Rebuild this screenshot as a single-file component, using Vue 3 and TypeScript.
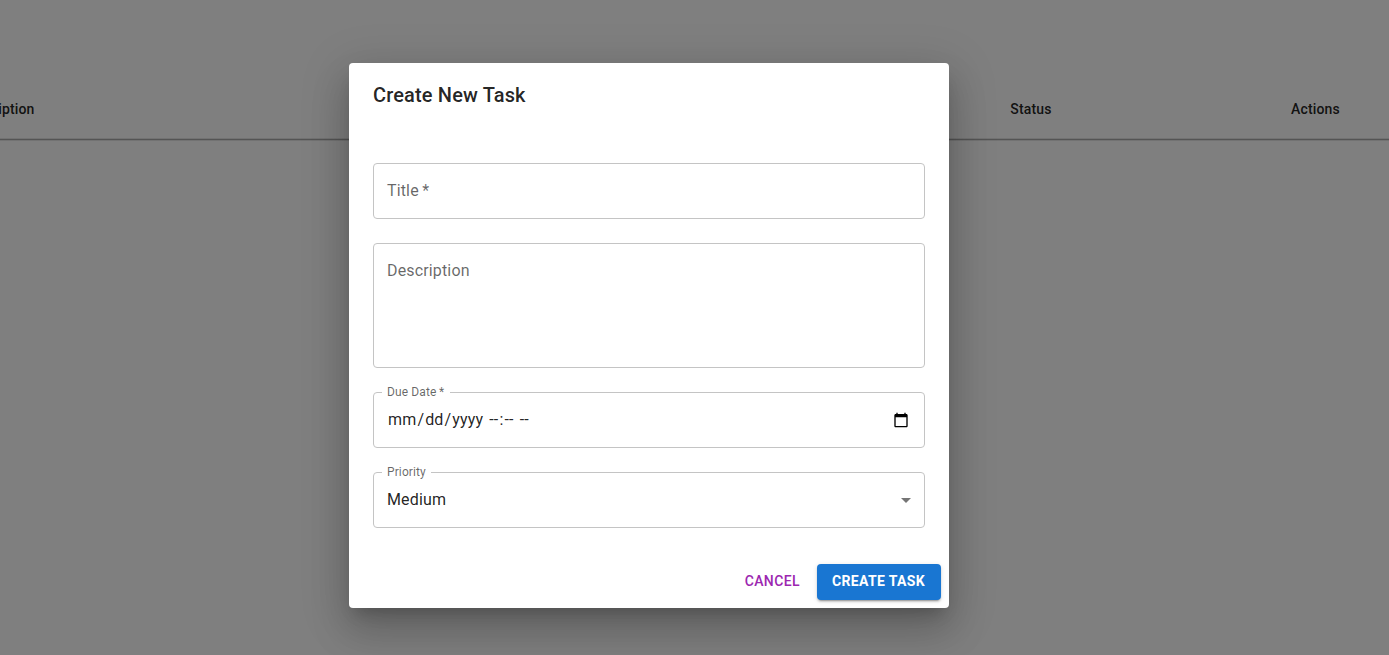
<script setup lang="ts">
import { ref } from 'vue'

const title = ref('')
const description = ref('')
const dateParts = ['mm', '/', 'dd', '/', 'yyyy', ' ', '--', ':', '--', ' ', '--']
const priority = ref('Medium')
</script>

<template>
  <div class="page">
    <div class="table-head">
      <span class="description">Description</span>
      <span>Status</span>
      <span>Actions</span>
    </div>

    <div class="backdrop">
      <form class="dialog" @submit.prevent>
        <h2>Create New Task</h2>
        <div class="content">
          <label class="field">
            <input v-model="title" type="text" required />
            <span v-show="!title" class="placeholder">Title&thinsp;*</span>
          </label>
          <label class="field tall">
            <textarea v-model="description"></textarea>
            <span v-show="!description" class="placeholder">Description</span>
          </label>
          <div class="field">
            <span class="value date"><span
              v-for="(part, i) in dateParts"
              :key="i"
              :class="{ segment: i % 2 === 0 }"
            >{{ part }}</span></span>
            <span class="floating due">Due Date&thinsp;*</span>
            <svg class="calendar" viewBox="0 0 24 24" width="16" height="16">
              <path d="M20 3h-1V1h-2v2H7V1H5v2H4c-1.1 0-2 .9-2 2v16c0 1.1.9 2 2 2h16c1.100 0 2-.9 2-2V5c0-1.100-.9-2-2-2zm0 18H4V8h16v13z" />
            </svg>
          </div>
          <div class="field">
            <span class="value">{{ priority }}</span>
            <span class="floating">Priority</span>
            <svg class="arrow" viewBox="0 0 24 24" width="24" height="24"><path d="M7 10l5 5 5-5z" /></svg>
          </div>
        </div>
        <div class="buttons">
          <button type="button" class="cancel">Cancel</button>
          <button type="submit" class="create">Create Task</button>
        </div>
      </form>
    </div>
  </div>
</template>

<style>
html,
body {
  margin: 0;
  overflow: hidden;
}
</style>

<style scoped>
.page {
  position: relative;
  height: 655px;
  padding-top: 80px;
  overflow: hidden;
  background: #fff;
  font-family: Roboto, Helvetica, Arial, sans-serif;
  color: rgba(0, 0, 0, 0.87);
  box-sizing: border-box;
}
.page * {
  box-sizing: border-box;
}
.table-head {
  display: grid;
  grid-template-columns: 1010.3px 280.7px 1fr;
  align-items: center;
  height: 60px;
  padding-bottom: 2px;
  border-bottom: 1px solid #a8a8a8;
  box-shadow: 0 1px 0 #e4e4e4, inset 0 -1px 0 #e4e4e4;
  font-size: 14px;
  font-weight: 500;
  line-height: 24px;
  letter-spacing: 0.15px;
}
.description {
  margin-left: -38.7px;
}
.backdrop {
  position: absolute;
  inset: 0;
  display: flex;
  align-items: flex-start;
  padding: 63px 0 0 349px;
  background: rgba(0, 0, 0, 0.5);
}
.dialog {
  width: 600px;
  height: 545px;
  background: #fff;
  border-radius: 4px;
  box-shadow: 0 11px 15px -7px rgba(0, 0, 0, 0.2), 0 24px 38px 3px rgba(0, 0, 0, 0.14),
    0 9px 46px 8px rgba(0, 0, 0, 0.12);
}
h2 {
  margin: 0;
  padding: 16px 24px;
  font-size: 20px;
  font-weight: 500;
  line-height: 32px;
  letter-spacing: 0.15px;
}
.content {
  display: flex;
  flex-direction: column;
  gap: 24px;
  padding: 36px 24px 28px;
}
.field {
  position: relative;
  display: flex;
  height: 56px;
  padding: 0 13px;
  border: 1px solid #c4c4c4;
  border-radius: 4px;
  font-size: 16px;
  line-height: 23px;
  letter-spacing: 0.15px;
}
.field.tall {
  height: 125px;
}
input,
textarea {
  flex: 1;
  min-width: 0;
  height: 100%;
  margin: 0;
  padding: 15.5px 0;
  border: 0;
  outline: 0;
  background: none;
  resize: none;
  color: inherit;
  font: inherit;
  letter-spacing: inherit;
}
.placeholder {
  position: absolute;
  left: 13px;
  top: 15px;
  color: rgba(0, 0, 0, 0.6);
  pointer-events: none;
}
.floating {
  position: absolute;
  left: 8px;
  top: -9px;
  padding: 0 5px;
  background: #fff;
  color: rgba(0, 0, 0, 0.6);
  font-size: 12px;
  line-height: 17px;
  letter-spacing: 0.11px;
}
.due {
  padding-right: 6px;
}
.value {
  padding-top: 15px;
}
.date {
  white-space: pre;
}
.segment {
  padding: 0 1px;
}
.calendar {
  position: absolute;
  right: 15px;
  top: 19px;
  fill: #000;
}
.arrow {
  position: absolute;
  right: 6px;
  top: 15px;
  fill: rgba(0, 0, 0, 0.54);
}
.buttons {
  display: flex;
  justify-content: flex-end;
  gap: 8px;
  padding: 8px;
}
button {
  height: 36px;
  border: 0;
  border-radius: 4px;
  font: 500 14px/24px Roboto, Helvetica, Arial, sans-serif;
  letter-spacing: 0.4px;
  text-transform: uppercase;
}
.cancel {
  padding: 5px 9px 7px 8px;
  background: none;
  color: #9c27b0;
}
.create {
  width: 124px;
  padding: 5px 1px 7px 0;
  background: #1976d2;
  color: #fff;
  font-weight: 700;
  letter-spacing: 0.36px;
  box-shadow: 0 3px 1px -2px rgba(0, 0, 0, 0.2), 0 2px 2px rgba(0, 0, 0, 0.14),
    0 1px 5px rgba(0, 0, 0, 0.12);
}
</style>
